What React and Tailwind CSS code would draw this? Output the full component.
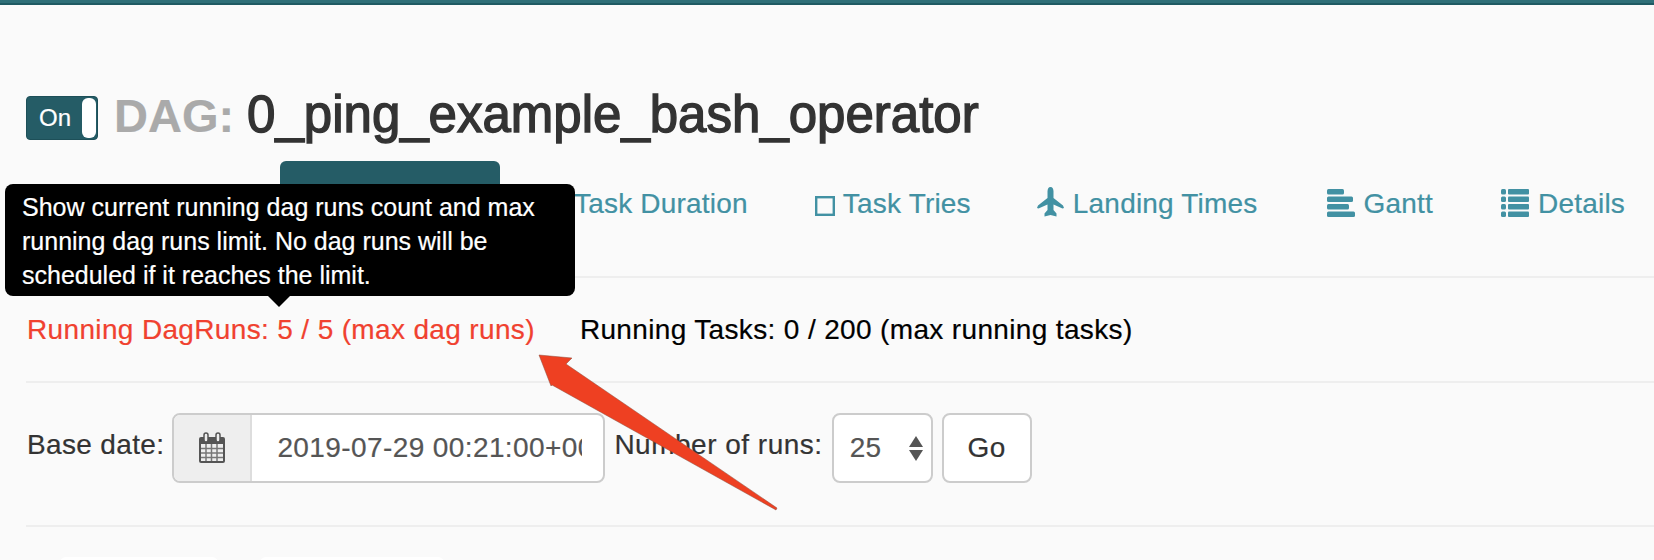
import React from "react";

function NavLink({ icon, children, className }) {
  return (
    <a className={"flex items-center gap-[9px] text-[#4291a3] text-[28px] tracking-[0.2px] leading-[32px] " + (className || "")}>
      {icon}
      {children}
    </a>
  );
}

function SquareIcon() {
  return (
    <svg width="20" height="20" viewBox="0 0 20 20" className="mt-[5px] -mr-[1px]">
      <rect x="1.2" y="1.2" width="17.6" height="17.6" fill="none" stroke="currentColor" strokeWidth="2.4" />
    </svg>
  );
}

function PlaneIcon() {
  return (
    <svg width="27" height="30" viewBox="0 0 27 30" className="-mt-[3px]" fill="currentColor">
      <path d="M13.5 0C15.500 0 16.500 2 16.500 4.500V11L26 18.500 27 21 25.500 21.500 16.500 17.500V23L19.500 26.500V29.500L13.500 28 7.500 29.500V26.500L10.500 23V17.500L1.500 21.500 0 21 1 18.500 10.500 11V4.500C10.500 2 11.500 0 13.500 0Z" />
    </svg>
  );
}

function GanttIcon() {
  return (
    <svg width="28" height="28" viewBox="0 0 28 28" fill="currentColor" className="-mt-[2px]">
      <rect x="0" y="0" width="17" height="5.500" rx="1.500" />
      <rect x="0" y="7.500" width="26" height="5.500" rx="1.500" />
      <rect x="0" y="15" width="22" height="5.500" rx="1.500" />
      <rect x="0" y="22.500" width="28" height="5.500" rx="1.500" />
    </svg>
  );
}

function ListIcon() {
  return (
    <svg width="28" height="28" viewBox="0 0 28 28" fill="currentColor" className="-mt-[2px]">
      <rect x="0" y="0" width="5" height="5.500" rx="1.500" />
      <rect x="7" y="0" width="21" height="5.500" rx="1" />
      <rect x="0" y="7.500" width="5" height="5.500" rx="1.500" />
      <rect x="7" y="7.500" width="21" height="5.500" rx="1" />
      <rect x="0" y="15" width="5" height="5.500" rx="1.500" />
      <rect x="7" y="15" width="21" height="5.500" rx="1" />
      <rect x="0" y="22.500" width="5" height="5.500" rx="1.500" />
      <rect x="7" y="22.500" width="21" height="5.500" rx="1" />
    </svg>
  );
}

function CalendarIcon() {
  return (
    <svg width="28" height="32" viewBox="0 0 28 32">
      <rect x="1" y="5" width="26" height="26" rx="2" fill="#555" />
      <rect x="3" y="12" width="22" height="17" fill="#eee" />
      <path d="M8 12v17M13.500 12v17M19 12v17M3 16.500h22M3 21h22M3 25.500h22" stroke="#777" strokeWidth="1.500" />
      <rect x="6" y="1" width="4" height="9" rx="2" fill="#eee" stroke="#555" strokeWidth="1.500" />
      <rect x="18" y="1" width="4" height="9" rx="2" fill="#eee" stroke="#555" strokeWidth="1.500" />
    </svg>
  );
}

export default function App() {
  return (
    <div className="relative w-[1654px] h-[560px] overflow-hidden bg-[#fafafa] font-['Liberation_Sans',Arial,sans-serif] text-[#333] [-webkit-text-stroke-width:0.2px]">
      <div className="h-[5px] bg-[#2f6f78] border-b-[2px] border-[#1f5a63]" />

      <div className="pl-[26px]">
        <div className="flex items-center gap-[16px] h-[50px] mt-[88px]">
          <div className="flex items-center justify-between w-[72px] h-[44px] bg-[#255c66] border border-[#1d4f58] rounded-[4px] pl-[12px] pr-[1px] py-[1px] text-white text-[24px]">
            <span>On</span>
            <span className="w-[14px] h-full bg-white rounded-[6px]" />
          </div>
          <h1 className="flex items-baseline gap-[13px] mb-[6px] whitespace-nowrap font-normal leading-[50px]">
            <span className="text-[#aaa] text-[47px] font-bold">DAG:</span>
            <span className="text-[51px] [-webkit-text-stroke-width:1.4px]">0_ping_example_bash_operator</span>
          </h1>
        </div>

        <div className="flex items-start h-[115px] mt-[18px]">
          <div className="ml-[254px] w-[220px] h-[60px] bg-[#255c66] rounded-t-[6px]" />
          <div className="flex items-center pt-[25px] h-[60px] pl-[74px] whitespace-nowrap">
            <NavLink>Task Duration</NavLink>
            <NavLink className="ml-[67px]" icon={<SquareIcon />}>Task Tries</NavLink>
            <NavLink className="ml-[66px]" icon={<PlaneIcon />}>Landing Times</NavLink>
            <NavLink className="ml-[69px]" icon={<GanttIcon />}>Gantt</NavLink>
            <NavLink className="ml-[68px]" icon={<ListIcon />}>Details</NavLink>
          </div>
        </div>
        <hr className="border-t-[2px] border-[#eee]" />

        <div className="flex items-center h-[103px] pl-[1px] text-[28px] tracking-[0.35px] whitespace-nowrap">
          <span className="text-[#f0412f]">Running DagRuns: 5 / 5 (max dag runs)</span>
          <span className="ml-[45px] text-black">Running Tasks: 0 / 200 (max running tasks)</span>
        </div>
        <hr className="border-t-[2px] border-[#eee]" />

        <div className="flex items-center h-[142px] pb-[12px] pl-[1px] text-[28px] tracking-[0.35px] whitespace-nowrap">
          <span className="mr-[8px] -mt-[7px]">Base date:</span>
          <div className="flex w-[433px] h-[70px] border-[2px] border-[#ccc] rounded-[8px] overflow-hidden bg-white">
            <div className="flex items-center justify-center w-[78px] bg-[#eee] border-r-[2px] border-[#ddd]">
              <CalendarIcon />
            </div>
            <div className="flex-1 overflow-hidden pl-[25px] mr-[21px] flex items-center text-[#555] tracking-[0.4px]">2019-07-29 00:21:00+00:00</div>
          </div>
          <span className="ml-[9px] mr-[9px] -mt-[7px] tracking-[0.5px]">Number of runs:</span>
          <div className="flex items-center justify-between w-[101px] h-[70px] border-[2px] border-[#ccc] rounded-[8px] bg-white pl-[16px] pr-[8px] text-[#555]">
            <span>25</span>
            <span className="flex flex-col gap-[3px]">
              <span className="w-0 h-0 border-x-[7px] border-x-transparent border-b-[11px] border-b-[#555]" />
              <span className="w-0 h-0 border-x-[7px] border-x-transparent border-t-[11px] border-t-[#555]" />
            </span>
          </div>
          <div className="flex items-center justify-center w-[90px] h-[70px] ml-[9px] border-[2px] border-[#ccc] rounded-[8px] bg-white">Go</div>
        </div>
        <hr className="border-t-[2px] border-[#eee]" />
      </div>

      <div className="absolute left-[5px] top-[184px] w-[570px] h-[112px] bg-black rounded-[8px] text-white text-[25px] leading-[34px] pl-[17px] pt-[6px]">
        <p>Show current running dag runs count and max</p>
        <p>running dag runs limit. No dag runs will be</p>
        <p>scheduled if it reaches the limit.</p>
        <span className="absolute left-[263px] top-[112px] w-0 h-0 border-x-[11px] border-x-transparent border-t-[11px] border-t-black" />
      </div>

      <svg className="absolute left-0 top-0 pointer-events-none" width="1654" height="560" viewBox="0 0 1654 560">
        <path d="M539 355 L572 358 L566 364 L777 508 L776 510 L552 385 L551 386 Z" fill="#ee4022" stroke="#8a4a3a" strokeWidth="0.5" />
      </svg>

      <div className="absolute left-[60px] top-[557px] w-[158px] h-[20px] bg-white rounded-t-[6px]" />
      <div className="absolute left-[260px] top-[557px] w-[184px] h-[20px] bg-white rounded-t-[6px]" />
    </div>
  );
}
